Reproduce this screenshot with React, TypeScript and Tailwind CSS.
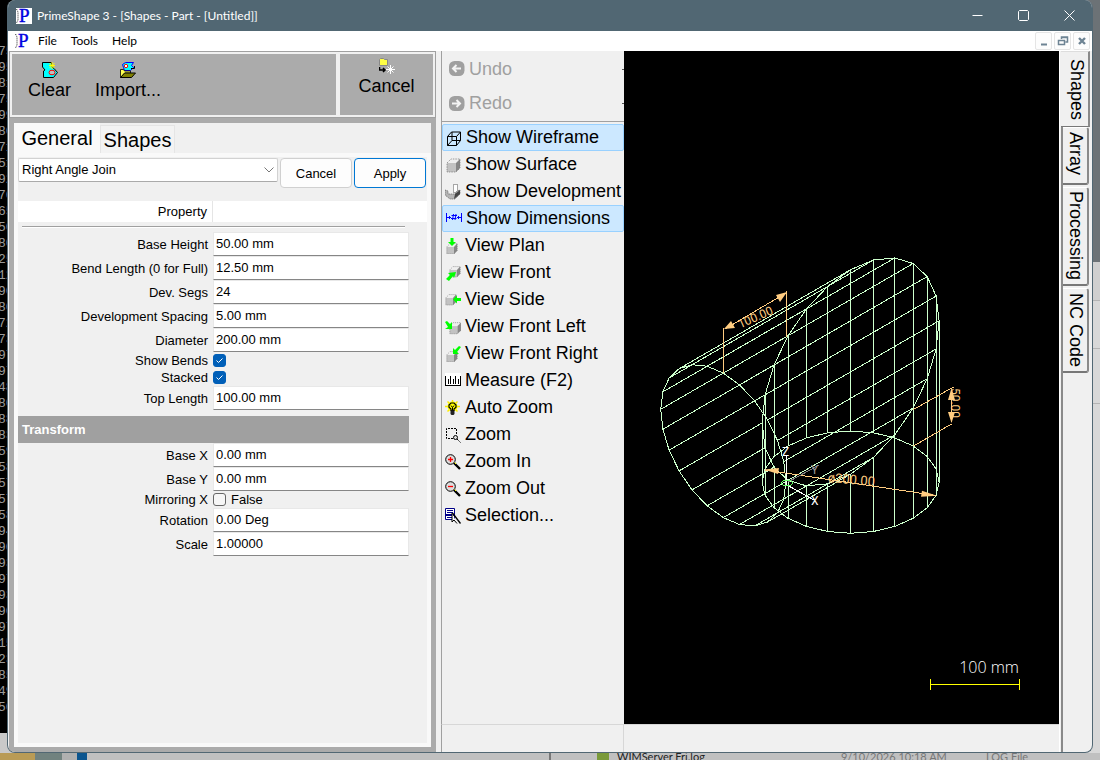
import React, { useState } from "react";

const SANS = "font-['Liberation_Sans',Arial,sans-serif]";

const CONSOLE = ["75", "95", "81", "75", "99", "80", "71", "51", "92", "70", "65", "50", "80", "25", "12", "90", "80", "72", "73", "97", "97", "48", "80", "88", "83", "59", "58", "57", "57", "58", "94", "90", "93", "97", "93", "90", "97", "15", "23", "85", "49", "50"];

/* ---------- Icons ---------- */

function AppIcon({ boxed = false }: { boxed?: boolean }) {
  return (
    <svg viewBox="0 0 16 16" className="h-4 w-4 shrink-0" aria-hidden="true">
      {boxed && <rect width="16" height="16" fill="#fff" />}
      <path d="M.5 1l1.500 3v8l-1.500 3" stroke="#222" strokeWidth="1" fill="none" strokeDasharray="1 1" />
      <text x="3" y="14" fontSize="19" fill="#0000e0" stroke="#0000e0" strokeWidth=".4" fontFamily="Liberation Serif, serif">P</text>
    </svg>
  );
}

const ICON = "h-4 w-4 shrink-0";

function Svg({ children }: { children: React.ReactNode }) {
  return (
    <svg viewBox="0 0 16 16" className={ICON} fill="none" stroke="#000" aria-hidden="true">
      {children}
    </svg>
  );
}

const ClearIcon = () => (
  <Svg>
    <path d="M.5.500H9.500v4L12 6.500l3.500 4-4 5H1.500V9L3 8 .5 5z" fill="#0ff" />
    <ellipse cx="10" cy="10.500" rx="3" ry="2.300" fill="#c0c0c0" stroke="#f00" />
    <path d="M10 0v7M7 3.500h6M7.500 1l5 5M12.500 1l-5 5" stroke="#ff0" />
  </Svg>
);

const ImportIcon = () => (
  <Svg>
    <path d="M2.500 2.500l3-2h8l-2 3 2 2-3 3h-6l-1-3z" fill="#0ff" stroke="#00f" />
    <circle cx="6" cy="4" r="1.700" fill="#fff" stroke="#f00" />
    <path d="M.5 7.500h3l1 1.500h6v2H5l-4.500 4.500z" fill="#ff5" strokeWidth=".8" />
    <path d="M.5 15.500 4.500 11h11l-4 4.500z" fill="#808000" />
    <path d="M11 6.500h3.500V4" />
  </Svg>
);

const FolderCancelIcon = () => (
  <Svg>
    <path d="M.5 1.500l1-1h3l1 1h3v6h-8z" fill="#ff4" stroke="#888" />
    <path d="M.5 9v3H6M4 10l2 2-2 2" strokeWidth="1.500" />
    <path d="M11.500 7v9M7 11.500h9M8.500 8.500l6 6M14.500 8.500l-6 6" stroke="#fff" />
  </Svg>
);

const WireIcon = () => (
  <Svg>
    <path d="M1.500 6.500h9v9h-9zM1.500 6.500l4-4.500h9l-4 4.500M14.500 2v8.500l-4 5M6 2v8.500h8.500M6 10.500l-4.500 5" />
  </Svg>
);

function Cube({ x = 0, y = 0, s = 1 }: { x?: number; y?: number; s?: number }) {
  return (
    <g transform={`translate(${x} ${y}) scale(${s})`} stroke="none">
      <path d="M1 6h9v9H1z" fill="#c2c2c2" />
      <path d="M1 6l4-4h9l-4 4z" fill="#efefef" />
      <path d="M10 6l4-4v9l-4 4z" fill="#868686" />
      <path d="M1 6l4-4h9v9l-4 4H1z" stroke="#777" strokeWidth=".7" strokeDasharray="1.500 1" fill="none" />
    </g>
  );
}

const SurfaceIcon = () => <Svg><Cube x={1} /></Svg>;

const DevelopmentIcon = () => (
  <Svg>
    <path d="M8.500.5h4v8h-4z" fill="#fff" stroke="#555" strokeDasharray="1 1" />
    <path d="M0 6l3 1v3h7l2-3 3-1v4l-5 5H5L0 11z" fill="#b5b5b5" stroke="#666" strokeWidth=".7" strokeDasharray="1.500 .7" />
    <path d="M9 15l6-5V6l-5 4z" fill="#444" stroke="none" />
  </Svg>
);

const DimensionsIcon = () => (
  <Svg>
    <path d="M.5 2v9M15.500 2v9M1 6.500h4M11 6.500h4M3.500 5v3M12.500 5v3M5.500 4.500h5.500M5 7.500h5.500M7.500 3l-1 6M10 3 9 9" stroke="#00f" />
  </Svg>
);

const PlanIcon = () => (
  <Svg>
    <Cube x={1} y={4} s={0.8} />
    <path d="M5.500 0h3v4H11L7 8 3 4h2.500z" fill="#0f0" stroke="none" />
  </Svg>
);
const FrontIcon = () => (
  <Svg>
    <Cube x={4} y={0} s={0.8} />
    <path d="M1 14l4-4-2-2 8-1-2 6-1-2-4 5z" fill="#0f0" stroke="none" />
  </Svg>
);
const SideIcon = () => (
  <Svg>
    <Cube x={0} y={1} s={0.8} />
    <path d="M8 7.500l4-4V6h4v3h-4v2.500z" fill="#0f0" stroke="none" />
  </Svg>
);
const FrontLeftIcon = () => (
  <Svg>
    <Cube x={4} y={2} s={0.85} />
    <path d="M0 3l2-1 3 3 2-2v7H0l3-2z" fill="#0f0" stroke="none" />
  </Svg>
);
const FrontRightIcon = () => (
  <Svg>
    <Cube x={1} y={4} s={0.8} />
    <path d="M16 1l-4 5 2 2H8V2l2 2 4-4z" fill="#0f0" stroke="none" />
  </Svg>
);
const MeasureIcon = () => (
  <Svg>
    <path d="M0 0h16v12H0z" fill="#fff" stroke="none" />
    <path d="M.5 3v9M3.500 6v5M5.500 3v8M8.500 6v5M10.500 3v8M13.500 6v5M15.500 3v9M0 12.500h16" />
  </Svg>
);
const BulbIcon = () => (
  <Svg>
    <path d="M7.500 0v14M0 6.500h15M2.500 1.500l10 10M12.500 1.500l-10 10" stroke="#fe0" strokeWidth="1.500" />
    <circle cx="7.500" cy="6.500" r="5" fill="#ff0" stroke="none" />
    <path d="M6 10.500V9L4 7.200V5l2-2h3l2 2v2.200L9 9v1.500z" fill="#ff0" strokeWidth="1.200" />
    <path d="M6 5.500l1.500 2 1.500-2M7.500 7.500v3" />
    <path d="M5.500 10.500h4v3.500l-1 1h-2l-1-1z" fill="#222" stroke="none" />
  </Svg>
);
const ZoomBoxIcon = () => (
  <Svg>
    <path d="M8 11.500H1.500v-10h10V7" strokeDasharray="2 1" />
    <circle cx="10.500" cy="10.500" r="2" fill="#ddd" />
    <path d="M12 12l3.500 3.500" strokeDasharray="1.500 .5" />
  </Svg>
);
function Magnifier({ plus = false }: { plus?: boolean }) {
  return (
    <Svg>
      <circle cx="5.500" cy="5.500" r="4.800" fill="#ddd" />
      <path d={plus ? "M3 5.500h5M5.500 3v5" : "M3 5.500h5"} stroke="#f00" strokeWidth="1.300" />
      <path d="M9 9l6 6" strokeWidth="2.400" />
      <path d="M9.500 8.500l1.500 1.500" stroke="#ff0" />
    </Svg>
  );
}
const SelectionIcon = () => (
  <Svg>
    <path d="M.5.500h9v11h-9z" fill="#fff" stroke="#008" />
    <path d="M2 2.500h6M2 4.500h6M2 9.500h5" stroke="#008" />
    <path d="M1 6h8v2H1z" fill="#008" stroke="none" />
    <path d="M7 5v9l2-2 3 3.500" fill="#fff" />
    <path d="M7.500 5l8 10.500" strokeWidth="1.300" />
  </Svg>
);
function RoundArrow({ flip = false }: { flip?: boolean }) {
  return (
    <Svg>
      <rect x="0" y="0" width="15.500" height="15" rx="5.500" fill="#a0a0a0" stroke="none" />
      <path d={flip ? "M3 7.500h8M7.500 4l3.500 3.500L7.500 11" : "M12 7.500H4M7.500 4 4 7.500 7.500 11"} stroke="#f4f4f4" strokeWidth="2" />
    </Svg>
  );
}

/* ---------- Viewport: mitred right-angle join in isometric projection ---------- */

const SCALE = 0.885;
const JX = 850.6;
const JY = 371.9;

function project(x: number, y: number, z: number): [number, number] {
  return [JX + SCALE * 0.7071 * (x + y), JY + SCALE * (0.4082 * (x - y) - 0.8165 * z)];
}

function buildJoin() {
  const end: string[] = [];
  const mitre: string[] = [];
  const base: string[] = [];
  const lines: string[] = [];
  const fmt = (p: [number, number]) => `${p[0].toFixed(1)} ${p[1].toFixed(1)}`;
  for (let i = 0; i < 24; i++) {
    const t = (i * Math.PI) / 12;
    const c = 100 * Math.cos(t);
    const s = 100 * Math.sin(t);
    const e = fmt(project(c, -203.4, s));
    const m = fmt(project(c, s, s));
    const b = fmt(project(c, s, -152.6));
    end.push(e);
    mitre.push(m);
    base.push(b);
    lines.push(`M${e}L${m}L${b}`);
  }
  return [end, mitre, base].map((ring) => `M${ring.join("L")}Z`).join("") + lines.join("");
}

const JOIN_PATH = buildJoin();

function Viewport() {
  return (
    <svg
      viewBox="624 51 435 673"
      className="h-full w-full"
      role="img"
      aria-label="Wireframe of right angle join"
      fill="none"
      fontFamily="Roboto, sans-serif"
    >
      <g shapeRendering="crispEdges">
        <path d={JOIN_PATH} stroke="#ccffcc" />
        <path d="M723.500 373V327.500M786.500 337V291M725 329l61-36M913.500 409.500l40-22.500M913.500 446l38-22M951.500 390v32M765 470l171 25.500" stroke="#ffcc80" />
        <path d="M786.500 485V456M787 485l27 15" stroke="#fff" />
        <path d="M788 482l31-17" stroke="#808080" />
        <ellipse cx="787" cy="483" rx="5.500" ry="3" stroke="#66ff66" />
      </g>
      <g fill="#ffcc80">
        <path d="M724 329l7-8 4 7zM787 292l-11 3 4 7zM951.500 388l-3.500 12h7zM951.500 423l-3.500-11h7zM764 469.500l15-1.500-1 6zM937 495.800l-15-5-1 6z" />
        <text x="757" y="321" fontSize="12" textAnchor="middle" transform="rotate(-24 757 321)">100.00</text>
        <text x="951" y="403" fontSize="12" textAnchor="middle" transform="rotate(90 951 403)">50.00</text>
        <text x="851" y="484" fontSize="13" textAnchor="middle" transform="rotate(5 851 484)">ø200.00</text>
      </g>
      <text x="811" y="505" fontSize="12" fill="#fff">X</text>
      <text x="811" y="474" fontSize="12" fill="#999">Y</text>
      <text x="782" y="456" fontSize="12" fill="#fff">Z</text>
      <text x="1019" y="673" fontSize="16" fill="#fff" textAnchor="end" fontWeight="300" fontFamily="Open Sans, sans-serif">100 mm</text>
      <path d="M930.500 679v11M1019.500 679v11M930 684.500h90" stroke="#ff0" shapeRendering="crispEdges" />
    </svg>
  );
}

/* ---------- Property form ---------- */

const LABEL = "w-[190px] shrink-0 pt-0.5 text-right text-[13px] leading-4";

function Field({ label, value }: { label: string; value: string }) {
  const id = label.replace(/\W+/g, "-").toLowerCase();
  return (
    <div className="flex h-6 items-center gap-[5px]">
      <label htmlFor={id} className={LABEL}>{label}</label>
      <input
        id={id}
        defaultValue={value}
        className="h-6 min-w-0 flex-1 border border-b-[#868686] border-l-[#e8e8e8] border-r-[#e8e8e8] border-t-[#e8e8e8] bg-white px-0.5 pb-0.5 text-[13px] leading-4 outline-none"
      />
    </div>
  );
}

function Check({ label, on, text }: { label: string; on: boolean; text?: string }) {
  const id = label.replace(/\W+/g, "-").toLowerCase();
  const [checked, setChecked] = useState(on);
  return (
    <div className="flex h-[17px] items-center gap-[5px]">
      <label htmlFor={id} className="w-[190px] shrink-0 text-right text-[13px] leading-4">{label}</label>
      <span className="relative flex h-[13px] w-[13px]">
        <input
          id={id}
          type="checkbox"
          checked={checked}
          onChange={(e) => setChecked(e.target.checked)}
          className="h-[13px] w-[13px] appearance-none rounded-[3px] border border-[#666] bg-[#f6f6f6] checked:border-[#005fb8] checked:bg-[#005fb8]"
        />
        {checked && (
          <svg viewBox="0 0 13 13" className="pointer-events-none absolute inset-0" fill="none" stroke="#fff" aria-hidden="true">
            <path d="M3.500 6.500l2 2 4-4" />
          </svg>
        )}
      </span>
      {text && <span className="text-[13px] leading-4">{text}</span>}
    </div>
  );
}

const VIEW_ITEMS: { label: string; icon: React.ReactNode; active?: boolean }[] = [
  { label: "Show Wireframe", icon: <WireIcon />, active: true },
  { label: "Show Surface", icon: <SurfaceIcon /> },
  { label: "Show Development", icon: <DevelopmentIcon /> },
  { label: "Show Dimensions", icon: <DimensionsIcon />, active: true },
  { label: "View Plan", icon: <PlanIcon /> },
  { label: "View Front", icon: <FrontIcon /> },
  { label: "View Side", icon: <SideIcon /> },
  { label: "View Front Left", icon: <FrontLeftIcon /> },
  { label: "View Front Right", icon: <FrontRightIcon /> },
  { label: "Measure (F2)", icon: <MeasureIcon /> },
  { label: "Auto Zoom", icon: <BulbIcon /> },
  { label: "Zoom", icon: <ZoomBoxIcon /> },
  { label: "Zoom In", icon: <Magnifier plus /> },
  { label: "Zoom Out", icon: <Magnifier /> },
  { label: "Selection...", icon: <SelectionIcon /> },
];

/* ---------- Window parts ---------- */

function TitleBar() {
  return (
    <header className="flex h-[31px] shrink-0 items-center bg-[#516773] pl-2 text-white">
      <AppIcon boxed />
      <h1 className="ml-[5px] flex-1 text-[12px] font-normal">PrimeShape 3 - [Shapes - Part - [Untitled]]</h1>
      {[
        ["Minimize", "M.5 5.500h10"],
        ["Maximize", "M1.500.500h8l1 1v8l-1 1h-8l-1-1v-8z"],
        ["Close", "M.5.500l10 10M10.500.500l-10 10"],
      ].map(([name, d]) => (
        <button key={name} aria-label={name} className="flex h-full w-[46px] items-center justify-center">
          <svg viewBox="0 0 11 11" className="h-[11px] w-[11px]" fill="none" stroke="#fff"><path d={d} /></svg>
        </button>
      ))}
    </header>
  );
}

function MenuBar() {
  return (
    <nav className="flex h-5 shrink-0 items-center bg-white pl-[7px] pr-0.5 text-[12px]">
      <AppIcon />
      <div className="ml-[7px] flex flex-1 gap-[14px]">
        <button>File</button>
        <button>Tools</button>
        <button>Help</button>
      </div>
      <div className="flex gap-0.5">
        {[
          ["Minimize document", "M3 9.500h6", "2"],
          ["Restore document", "M4.500 4V2h6v5h-2M1.500 5.500h6v4h-6zM1 5.500h7M4 2.500h7", "1.500"],
          ["Close document", "M3 3l6 6M9 3l-6 6", "2.400"],
        ].map(([name, d, w]) => (
          <button key={name} aria-label={name} className="flex h-[18px] w-[17px] items-center justify-center rounded-[2px] border border-[#e5e5e5] bg-[#fdfdfd]">
            <svg viewBox="0 0 12 12" className="h-3 w-3" fill="none" stroke="#6e8494" strokeWidth={w}><path d={d} /></svg>
          </button>
        ))}
      </div>
    </nav>
  );
}

function ToolButton({ label, icon }: { label: string; icon: React.ReactNode }) {
  return (
    <button className="flex flex-col items-center text-[18px] leading-6">
      {icon}
      <span>{label}</span>
    </button>
  );
}

function LeftDock() {
  return (
    <section className="flex w-[428px] shrink-0 flex-col pl-px">
      <div className="flex h-[67px] shrink-0 gap-1 border border-[#a0a0a0] p-0.5">
        <div className="flex flex-1 items-start gap-6 bg-[#ababab] pl-4 pt-2">
          <ToolButton label="Clear" icon={<ClearIcon />} />
          <ToolButton label="Import..." icon={<ImportIcon />} />
        </div>
        <div className="flex w-[93px] items-start justify-center bg-[#ababab] pt-1">
          <ToolButton label="Cancel" icon={<FolderCancelIcon />} />
        </div>
      </div>
      <div className="flex min-h-0 flex-1 flex-col bg-[#ababab] px-[5px] py-[5px]">
        <div className="flex min-h-0 flex-1 flex-col bg-[#f0f0f0]">
          <div role="tablist" className="flex h-[30px] shrink-0 items-end text-[20px] leading-6">
            <button role="tab" aria-selected="true" className="h-[30px] w-[86px] bg-[#f9f9f9]">General</button>
            <button role="tab" aria-selected="false" className="h-7 w-[75px] border border-b-0 border-[#e5e5e5] bg-[#f3f3f3]">Shapes</button>
          </div>
          <div className="min-h-0 flex-1 border-4 border-[#f9f9f9] bg-[#f0f0f0]">
            <div className="flex gap-0.5 pr-px">
              <div className="relative h-6 flex-1">
                <select aria-label="Shape type" className="h-6 w-full appearance-none rounded-[2px] border border-b-[#aaa] border-l-[#d2d2d2] border-r-[#d2d2d2] border-t-[#d2d2d2] bg-white px-[3px] text-[13px]">
                  <option>Right Angle Join</option>
                </select>
                <svg viewBox="0 0 10 6" className="pointer-events-none absolute right-1 top-[10px] h-1.5 w-2.5" fill="none" stroke="#777" aria-hidden="true"><path d="M.5.500 5 5 9.500.500" /></svg>
              </div>
              <button className="mt-px h-[30px] w-[72px] rounded-[4px] border border-[#d0d0d0] bg-[#fdfdfd] pt-0.5 text-[13px]">Cancel</button>
              <button className="mt-px h-[30px] w-[72px] rounded-[4px] border border-[#0078d4] bg-[#fdfdfd] pt-0.5 text-[13px]">Apply</button>
            </div>
            <div className="mt-[13px] flex h-[21px] bg-white text-[13px]">
              <div className="w-[195px] border-r border-[#e5e5e5] pr-[5px] text-right leading-[21px]">Property</div>
            </div>
            <div className="ml-1 mr-[22px] mt-1 h-0.5 border-b border-t border-b-white border-t-[#a0a0a0]" />
            <form className="mr-[18px] mt-1" onSubmit={(e) => e.preventDefault()}>
              <Field label="Base Height" value="50.00 mm" />
              <Field label="Bend Length (0 for Full)" value="12.50 mm" />
              <Field label="Dev. Segs" value="24" />
              <Field label="Development Spacing" value="5.00 mm" />
              <Field label="Diameter" value="200.00 mm" />
              <Check label="Show Bends" on />
              <Check label="Stacked" on />
              <Field label="Top Length" value="100.00 mm" />
              <h2 className="mt-1.5 h-[27px] bg-[#a0a0a0] pl-1 text-[13px] font-bold leading-[27px] text-white">Transform</h2>
              <Field label="Base X" value="0.00 mm" />
              <Field label="Base Y" value="0.00 mm" />
              <Check label="Mirroring X" on={false} text="False" />
              <Field label="Rotation" value="0.00 Deg" />
              <Field label="Scale" value="1.00000" />
            </form>
          </div>
        </div>
      </div>
    </section>
  );
}

function ViewMenu() {
  return (
    <aside className="flex w-[183px] shrink-0 flex-col border-l border-[#a0a0a0] text-[18px]">
      <div className="flex h-[71px] flex-col border-b border-[#a0a0a0] pt-px text-[#a0a0a0]">
        {["Undo", "Redo"].map((name) => (
          <button key={name} disabled className="flex h-[35px] items-center gap-1 pl-[7px]">
            <RoundArrow flip={name === "Redo"} />
            <span className="flex-1 text-left">{name}</span>
            <span className="h-px w-0.5 bg-[#555]" />
          </button>
        ))}
      </div>
      <div className="flex flex-col pt-0.5">
        {VIEW_ITEMS.map(({ label, icon, active }) => (
          <button
            key={label}
            aria-pressed={!!active}
            className={
              active
                ? "flex h-[27px] items-center gap-1 whitespace-nowrap rounded-[2px] border border-[#99d1ff] bg-[#cce8ff] pl-[3px]"
                : "flex h-[27px] items-center gap-1 whitespace-nowrap pl-[3px]"
            }
          >
            {icon}
            <span>{label}</span>
          </button>
        ))}
      </div>
    </aside>
  );
}

const SIDE_TAB =
  "rounded-r-[3px] border border-l-0 border-b-2 border-b-[#777] border-r-2 border-r-[#8a8a8a] border-t-white bg-[#f0f0f0] pl-1 [writing-mode:vertical-rl]";

function SideTabs() {
  return (
    <div role="tablist" aria-orientation="vertical" className="flex w-[33px] shrink-0 flex-col border-l border-white pl-px pr-0.5 text-[18px] leading-[22px]">
      <button role="tab" aria-selected="true" className="h-[76px] border border-l-0 border-b-[#777] border-r-2 border-r-[#8a8a8a] border-t-[#ddd] bg-[#f0f0f0] pl-1 pt-px [writing-mode:vertical-rl]">Shapes</button>
      <div className="flex flex-1 flex-col gap-0.5 border-l-2 border-[#8a8a8a] pr-px">
        <button role="tab" aria-selected="false" className={`h-[58px] pb-1 ${SIDE_TAB}`}>Array</button>
        <button role="tab" aria-selected="false" className={`h-[99px] ${SIDE_TAB}`}>Processing</button>
        <button role="tab" aria-selected="false" className={`h-[85px] ${SIDE_TAB}`}>NC Code</button>
      </div>
    </div>
  );
}

function Desktop() {
  return (
    <div className="absolute inset-0 flex flex-col" aria-hidden="true">
      <div className="flex min-h-0 flex-1 justify-between">
        <div className="flex w-5 flex-col bg-[#c9c9c9]">
          <div className="h-[733px] overflow-hidden bg-black pt-11 font-['Liberation_Mono',monospace] text-[13px] leading-4 text-[#9a9a9a]">
            {CONSOLE.map((n, i) => (
              <div key={i} className="-ml-0.5">{n}</div>
            ))}
          </div>
        </div>
        <div className="flex w-5 flex-col bg-[#d8d8d8]">
          <div className="h-[262px] bg-[#6c7276]" />
          <div className="h-[39px] border-b border-[#b4b4b4] bg-[#cfcfcf]" />
          <div className="h-12 border-b border-[#b4b4b4]" />
          <div className="h-[55px] border-b border-[#b4b4b4]" />
        </div>
      </div>
      <div className="flex h-[7px] shrink-0 bg-[#c0c0c0] text-[11px] leading-[7px]">
        <div className="w-[35px] bg-[#b99b55]" />
        <div className="w-[27px] bg-[#71827f]" />
        <div className="w-[15px] bg-[#b0b0b0]" />
        <div className="w-[10px] bg-[#0b558f]" />
        <div className="w-[464px] border-r-2 border-[#777]" />
        <div className="ml-[46px] w-3 bg-[#7a9a3a]" />
        <div className="ml-2 w-[224px] text-[#222]">WIMServer Fri.log</div>
        <div className="w-[145px] text-[#777]">9/10/2026 10:18 AM</div>
        <div className="text-[#777]">LOG File</div>
      </div>
    </div>
  );
}

export default function App() {
  return (
    <div className="relative flex h-screen flex-col overflow-hidden bg-[#c0c0c0] pb-[7px] pl-[7px] pr-[7px] font-['Lato','Open_Sans',sans-serif] text-black">
      <Desktop />
      <main className="relative flex min-h-0 flex-1 flex-col overflow-hidden rounded-lg border border-t-0 border-[#516773] bg-[#f0f0f0]">
        <TitleBar />
        <MenuBar />
        <div className={`flex min-h-0 flex-1 ${SANS}`}>
          <LeftDock />
          <div className="w-[5px] shrink-0" />
          <div className="flex min-w-0 flex-1 flex-col">
            <div className="flex min-h-0 flex-1">
              <ViewMenu />
              <div className="min-w-0 flex-1 bg-black">
                <Viewport />
              </div>
            </div>
            <footer className="flex h-7 shrink-0 border-l border-t border-l-[#a0a0a0] border-t-[#d7d7d7]">
              <div className="w-[182px] border-r border-[#d7d7d7]" />
            </footer>
          </div>
          <SideTabs />
        </div>
      </main>
    </div>
  );
}
